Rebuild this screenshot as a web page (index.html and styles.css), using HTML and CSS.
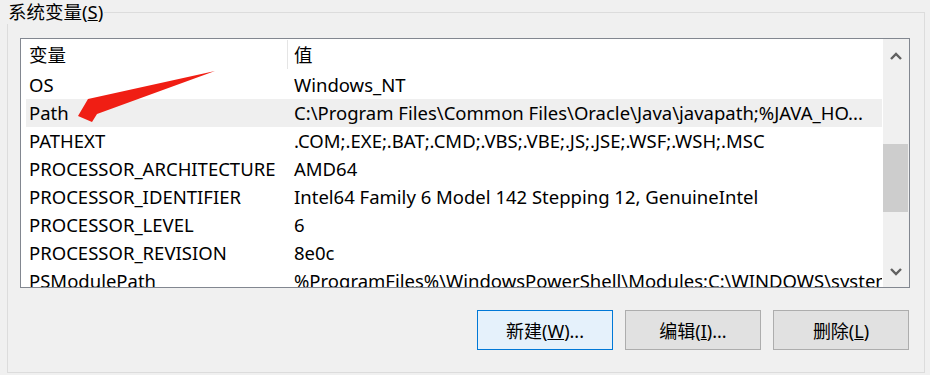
FILE: index.html
```html
<!DOCTYPE html>
<html lang="zh-CN">
  <head>
    <meta charset="UTF-8" />
    <meta name="viewport" content="width=device-width, initial-scale=1.0" />
    <title>系统变量</title>
    <link rel="stylesheet" href="styles.css">
  </head>
  <body>
    <fieldset class="group">
      <legend class="group-title">系统变量(<u>S</u>)</legend>

      <div class="list">
        <div class="table">
          <div class="row head">
            <div class="name">变量</div>
            <div class="value">值</div>
          </div>
          <div class="row">
            <div class="name">OS</div>
            <div class="value">Windows_NT</div>
          </div>
          <div class="row selected">
            <div class="name">Path</div>
            <div class="value">C:\Program Files\Common Files\Oracle\Java\javapath;%JAVA_HO...</div>
          </div>
          <div class="row">
            <div class="name">PATHEXT</div>
            <div class="value">.COM;.EXE;.BAT;.CMD;.VBS;.VBE;.JS;.JSE;.WSF;.WSH;.MSC</div>
          </div>
          <div class="row">
            <div class="name">PROCESSOR_ARCHITECTURE</div>
            <div class="value">AMD64</div>
          </div>
          <div class="row">
            <div class="name">PROCESSOR_IDENTIFIER</div>
            <div class="value">Intel64 Family 6 Model 142 Stepping 12, GenuineIntel</div>
          </div>
          <div class="row">
            <div class="name">PROCESSOR_LEVEL</div>
            <div class="value">6</div>
          </div>
          <div class="row">
            <div class="name">PROCESSOR_REVISION</div>
            <div class="value">8e0c</div>
          </div>
          <div class="row">
            <div class="name">PSModulePath</div>
            <div class="value">%ProgramFiles%\WindowsPowerShell\Modules;C:\WINDOWS\system32\WindowsPowerShell\v1.0\Modules</div>
          </div>
        </div>

        <div class="scrollbar">
          <div class="sb-btn sb-up">
            <svg width="12" height="8" viewBox="0 0 12 8"><polyline points="1,7 6,2 11,7" fill="none" stroke="#606060" stroke-width="2.4"/></svg>
          </div>
          <div class="track">
            <div class="thumb"></div>
          </div>
          <div class="sb-btn sb-down">
            <svg width="12" height="8" viewBox="0 0 12 8"><polyline points="1,1 6,6 11,1" fill="none" stroke="#606060" stroke-width="2.4"/></svg>
          </div>
        </div>
      </div>

      <div class="buttons">
        <button class="btn default">新建(<u>W</u>)...</button>
        <button class="btn">编辑(<u>I</u>)...</button>
        <button class="btn">删除(<u>L</u>)</button>
      </div>
    </fieldset>

    <!-- red annotation arrow pointing at Path -->
    <svg class="annot" width="930" height="375" viewBox="0 0 930 375">
      <polygon points="215,71 88,99 78,116 92,122 97,114" fill="#f01e14"/>
    </svg>
  </body>
</html>
```

FILE: styles.css
```css
body {
  margin: 0;
  background-color: #f0f0f0;
  font-family: "Noto Sans", "Noto Sans CJK SC", sans-serif;
  font-size: 18.5px;
  color: #000;
  position: relative;
  height: 375px;
  overflow: hidden;
}

.group {
  margin: 0 5px 0 7px;
  padding: 14px 14px 0 12px;
  border: 1px solid #dcdcdc;
  height: 373px;
  box-sizing: border-box;
}

.group-title {
  margin-left: -13px;
  padding: 0 1px;
  line-height: 24px;
}

.list {
  display: flex;
  height: 248px;
  border: 1px solid #828790;
  background-color: #fff;
}

.table {
  flex: 1;
  overflow: hidden;
}

.row {
  display: grid;
  grid-template-columns: 261px 1fr;
  height: 28px;
  line-height: 28px;
  margin-left: 5px;
  white-space: nowrap;
}

.row .name {
  padding-left: 3px;
  overflow: hidden;
}

.row .value {
  padding-left: 7px;
  overflow: hidden;
}

.row.head {
  height: 32px;
  line-height: 32px;
}

.row.head .value {
  padding-left: 6px;
  border-left: 1px solid #e5e5e5;
  margin: 1px 0 2px;
  line-height: 29px;
}

.row.selected {
  background-color: #efefef;
}

.scrollbar {
  width: 26px;
  display: flex;
  flex-direction: column;
  background-color: #f0f0f0;
  border-left: 1px solid #fff;
}

.sb-btn {
  display: flex;
  align-items: center;
  justify-content: center;
}

.sb-up {
  height: 34px;
}

.sb-down {
  height: 30px;
}

.track {
  flex: 1;
}

.thumb {
  margin: 71px 1px 0 0;
  height: 68px;
  background-color: #cdcdcd;
}

.buttons {
  display: flex;
  justify-content: flex-end;
  gap: 12px;
  margin-top: 22px;
  padding-right: 1px;
}

.btn {
  width: 136px;
  height: 40px;
  font-family: "Noto Sans", "Noto Sans CJK SC", sans-serif;
  font-size: 18px;
  color: #000;
  background-color: #e1e1e1;
  border: 1px solid #adadad;
  border-radius: 0;
  padding: 0;
}

.btn.default {
  background-color: #e5f1fb;
  border-color: #0078d7;
}

.annot {
  position: absolute;
  left: 0;
  top: 0;
  pointer-events: none;
}
```
